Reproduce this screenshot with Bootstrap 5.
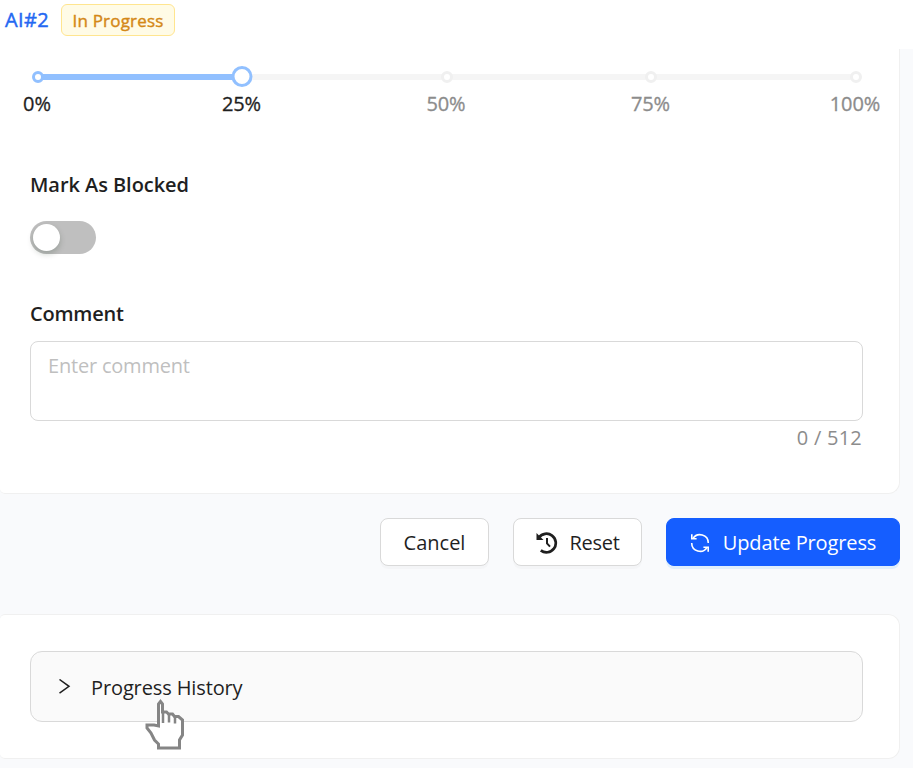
<!DOCTYPE html>
<html lang="en">
<head>
<meta charset="utf-8">
<meta name="viewport" content="width=device-width, initial-scale=1">
<title>Progress</title>
<link href="https://cdn.jsdelivr.net/npm/bootstrap@5.3.0/dist/css/bootstrap.min.css" rel="stylesheet">
<style>
body{font-family:"Open Sans","Noto Sans",sans-serif;font-size:20px;line-height:30px;color:#1f1f1f;background:#f9fafc;height:768px;overflow:hidden}
.topbar{height:49px;padding:4px 0 0 5px;gap:12px;background:#fff}
.item-id{color:#2468f2;width:44px;font-size:20px;line-height:32px;letter-spacing:.4px;white-space:nowrap;-webkit-text-stroke:.45px}
.tag{height:32px;width:114px;border:1px solid #ffe58f;border-radius:6px;background:#fffbe6;color:#d48817;font-size:17px;line-height:32px;letter-spacing:.2px;-webkit-text-stroke:.4px}
.panel{width:900px;background:#fff;border:1px solid #f0f0f0;border-left:0;padding:0 36px 0 30px}
.panel-form{height:445px;border-top:0;border-radius:0 0 12px 5px}
.panel-history{height:145px;margin-top:48px;border-radius:5px 12px 12px 5px;padding-top:36px}
.scale{width:818px;margin-left:8px;height:42px;padding-top:16px}
.rail{height:24px;width:818px;display:block;overflow:visible}
.ticks{width:818px;height:30px;margin-left:-1px}
.tick{width:0;white-space:nowrap;color:#8c8c8c;letter-spacing:-.1px;-webkit-text-stroke:.3px}
.tick.on{color:#1f1f1f}
.field-title{font-weight:600;letter-spacing:-.06px}
.t-block{margin-top:55px}
.switch{width:66px;height:33px;border-radius:17px;background:#bfbfbf;padding:3px;margin-top:21px}
.knob{width:27px;height:27px;border-radius:50%;background:#fff;box-shadow:0 3px 6px rgba(0,35,11,.2)}
.t-comment{margin-top:45px;letter-spacing:-.2px}
.comment-box{display:block;width:833px;height:80px;margin-top:12px;border:1px solid #d9d9d9;border-radius:8px;padding:9px 17px;resize:none;line-height:30px;letter-spacing:-.2px;color:#1f1f1f}
.comment-box::placeholder{color:#bfbfbf;opacity:1}
.count{color:#8c8c8c;width:832px;margin-top:2px;letter-spacing:.25px}
.actions{width:900px;margin-top:24px;gap:24px}
.act{height:48px;border:1px solid #d9d9d9;border-radius:8px;background:#fff;box-shadow:0 3px 0 rgba(0,0,0,.02);font-size:20px;color:#1f1f1f;padding:1px 0 0;line-height:30px}
.act-cancel{width:109px}
.act-reset{width:129px;gap:12px;letter-spacing:-.3px}
.act-update{width:234px;gap:13px;background:#155eff;border-color:#155eff;color:#fff;box-shadow:0 3px 0 rgba(5,145,255,.1);letter-spacing:-.12px}
.history{width:833px;height:71px;border:1px solid #d9d9d9;border-radius:12px;background:#fafafa;padding-left:27px;gap:20px;letter-spacing:-.12px}
.history span{padding-top:2px}
.pointer{left:144px;top:699px}
</style>
<script src="https://cdn.jsdelivr.net/npm/bootstrap@5.3.0/dist/js/bootstrap.bundle.min.js"></script>
</head>
<body>
<header class="topbar d-flex align-items-start">
  <a href="#" class="item-id text-decoration-none">AI#2</a>
  <span class="tag text-center">In Progress</span>
</header>
<main>
  <section class="panel panel-form">
    <div class="scale">
      <svg class="rail" viewBox="0 0 818 24" fill="#fff">
        <path d="M0 12H818" stroke="#f5f5f5" stroke-width="6"/>
        <path d="M0 12H204" stroke="#91c0ff" stroke-width="6"/>
        <circle cx="0" cy="12" r="4.5" stroke="#91c0ff" stroke-width="3"/>
        <g stroke="#f0f0f0" stroke-width="3"><circle cx="409" cy="12" r="4.5"/><circle cx="613" cy="12" r="4.5"/><circle cx="818" cy="12" r="4.5"/></g>
        <circle cx="204" cy="11.5" r="9" stroke="#91c0ff" stroke-width="3"/>
      </svg>
      <div class="ticks d-flex justify-content-between">
        <span class="tick on d-flex justify-content-center"><span>0%</span></span>
        <span class="tick on d-flex justify-content-center"><span>25%</span></span>
        <span class="tick d-flex justify-content-center"><span>50%</span></span>
        <span class="tick d-flex justify-content-center"><span>75%</span></span>
        <span class="tick d-flex justify-content-center"><span>100%</span></span>
      </div>
    </div>
    <div class="field-title t-block pt-4"><span>Mark As Blocked</span></div>
    <div class="switch" role="switch" aria-checked="false"><div class="knob"></div></div>
    <label class="field-title t-comment d-block" for="comment">Comment</label>
    <textarea id="comment" class="comment-box" placeholder="Enter comment"></textarea>
    <div class="count text-end">0 / 512</div>
  </section>
  <div class="actions d-flex justify-content-end">
    <button class="act act-cancel btn">Cancel</button>
    <button class="act act-reset btn d-flex align-items-center justify-content-center">
      <svg width="22" height="22" viewBox="0 0 22 22" fill="none" stroke="#1f1f1f"><path d="M3 5.500A9.300 9.300 0 1 1 4.800 18.400" stroke-width="2.7"/><path d="M.5 1v7h7z" fill="#1f1f1f" stroke="none"/><path d="M11 6v5.400l3 3.200" stroke-width="2"/></svg>
      <span>Reset</span></button>
    <button class="act act-update btn d-flex align-items-center justify-content-center">
      <svg width="20" height="20" viewBox="0 0 20 20" fill="none" stroke="#fff" stroke-width="1.6"><path d="M2.900 5.700A8.300 8.300 0 0 1 18.300 10M17.100 14.300A8.300 8.300 0 0 1 1.700 10"/><path d="M1.800 1.200V5.800H6.600M18.200 18.800V14.200H13.400"/></svg>
      <span>Update Progress</span></button>
  </div>
  <section class="panel panel-history">
    <div class="history d-flex align-items-center">
      <svg width="13" height="16" viewBox="0 0 13 16" fill="none" stroke="#1f1f1f" stroke-width="1.5"><path d="M1.500 .5L11 7.300L1.500 14.200"/></svg>
      <span>Progress History</span>
    </div>
  </section>
</main>
<svg class="pointer position-absolute" width="42" height="52" viewBox="0 0 42 52" fill="none" stroke="#858585" stroke-width="3"><path d="M14.500 27V5l2-2.500 2 2.500v8h4l2 2h4l2 2.500h4l4 3.500V36l-3 5v8H14.500v-4l-4-4-3.500-7-4-5v-3h7z" fill="#fff"/><path d="M19 13v11M25 15v8.500M31 18v6.500" stroke-width="2.500"/></svg>
</body>
</html>
